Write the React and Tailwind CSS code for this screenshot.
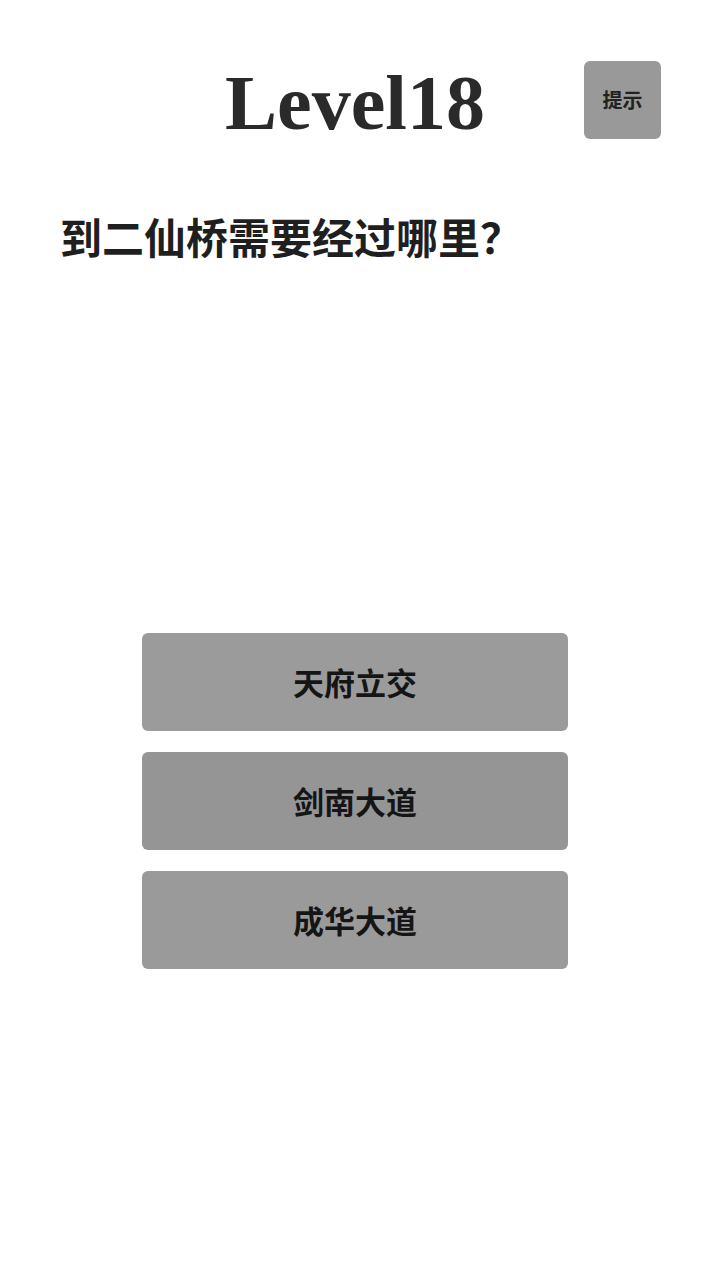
export default function App() {
  const options = [
    { label: "天府立交", bg: "bg-[#9b9b9b]" },
    { label: "剑南大道", bg: "bg-[#959595]" },
    { label: "成华大道", bg: "bg-[#9a9a9a]" },
  ];

  return (
    <div className="w-[710px] h-[1270px] bg-white overflow-hidden font-['Noto_Sans_CJK_SC',sans-serif]">
      {/* Header */}
      <div className="grid grid-cols-[1fr_auto_1fr] items-start pt-[61px]">
        <div />
        <h1 className="mt-[3px] text-[78px] leading-none font-bold text-[#2a2a2a] font-['Liberation_Serif','Noto_Sans_CJK_SC',serif]">
          Level18
        </h1>
        <div className="flex justify-end pr-[49px]">
          <button className="w-[77px] h-[78px] rounded-[6px] bg-[#999999] text-[20px] font-bold text-[#222] flex items-center justify-center">
            提示
          </button>
        </div>
      </div>

      {/* Question */}
      <p className="mt-[73px] pl-[60px] text-[42px] leading-none font-bold text-[#1f1f1f]">
        到二仙桥需要经过哪里？
      </p>

      {/* Options */}
      <div className="mt-[376px] flex flex-col gap-[21px] w-[426px] mx-auto">
        {options.map((o) => (
          <button
            key={o.label}
            className={`h-[98px] rounded-[6px] ${o.bg} text-[31px] font-bold text-[#151515] flex items-center justify-center`}
          >
            {o.label}
          </button>
        ))}
      </div>
    </div>
  );
}
